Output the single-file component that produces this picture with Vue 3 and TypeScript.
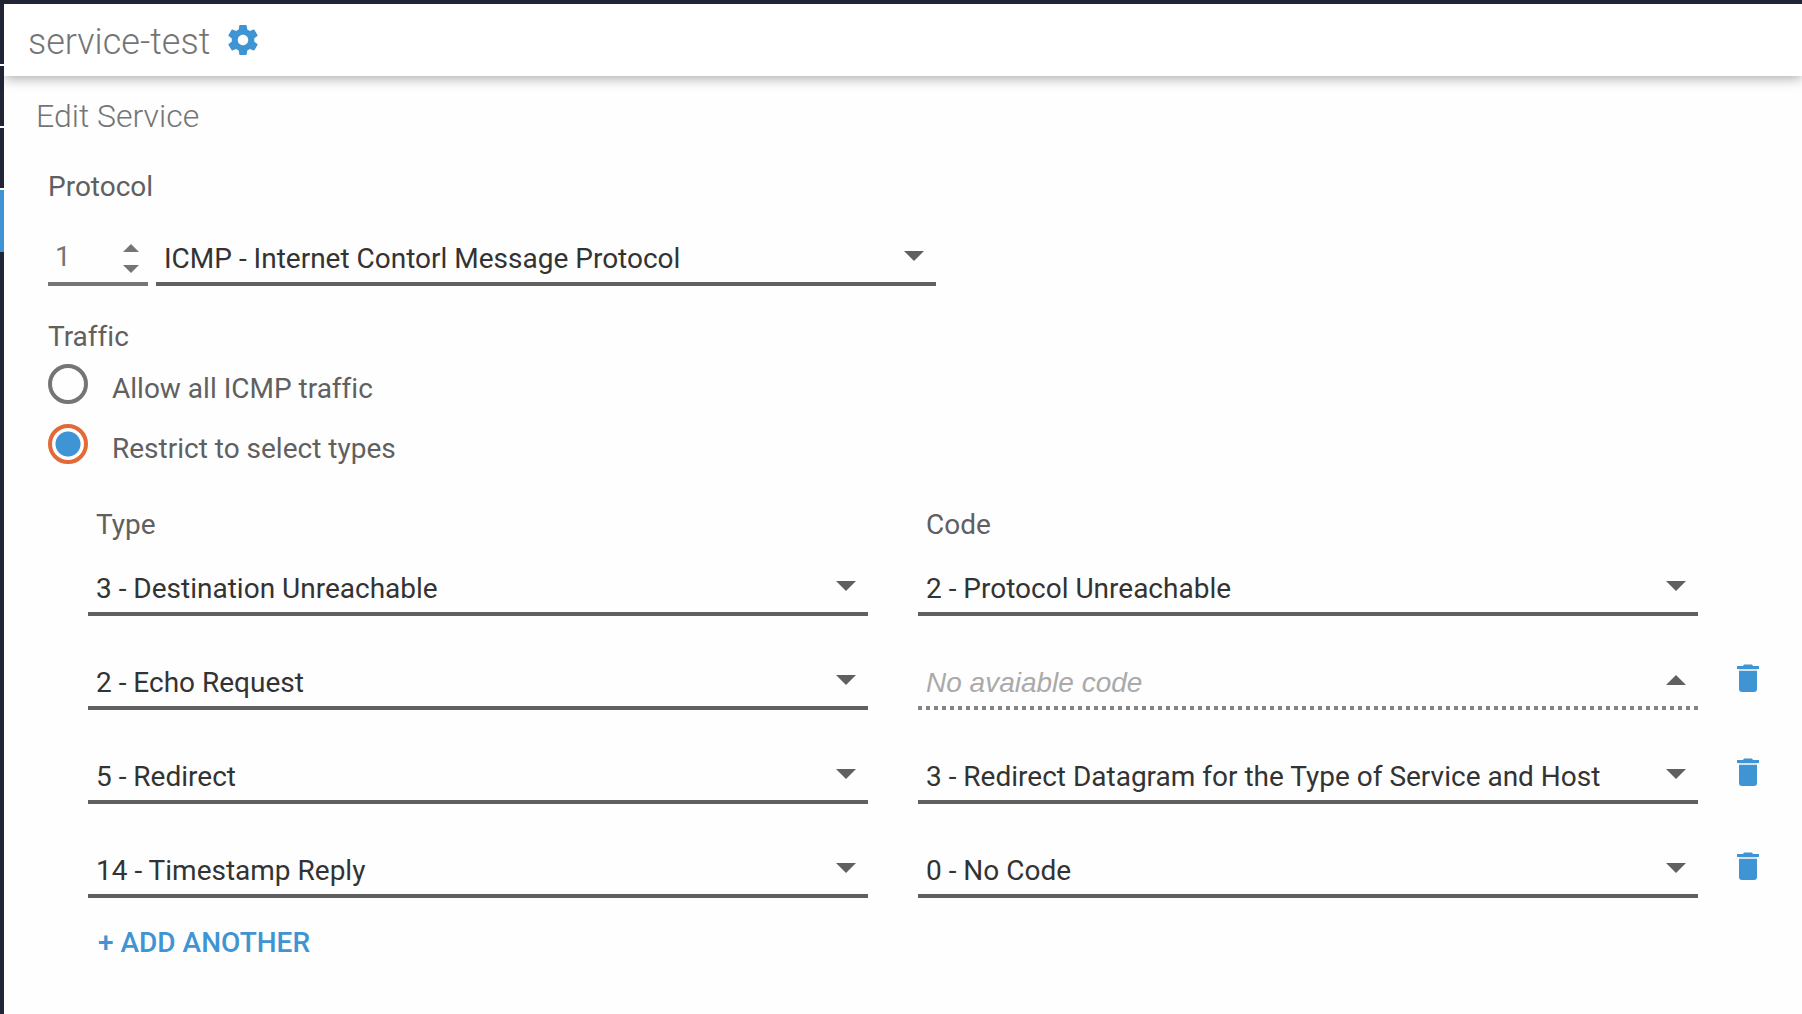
<script setup lang="ts">
import { ref } from 'vue'

interface Rule {
  id: number
  type: string
  code: string | null
}

const protocolNumber = ref(1)
const protocol = ref('ICMP - Internet Contorl Message Protocol')
const traffic = ref<'all' | 'restrict'>('restrict')

const rules = ref<Rule[]>([
  { id: 1, type: '3 - Destination Unreachable', code: '2 - Protocol Unreachable' },
  { id: 2, type: '2 - Echo Request', code: null },
  { id: 3, type: '5 - Redirect', code: '3 - Redirect Datagram for the Type of Service and Host' },
  { id: 4, type: '14 - Timestamp Reply', code: '0 - No Code' },
])

const types = rules.value.map((r) => r.type)
const codes = rules.value.flatMap((r) => (r.code ? [r.code] : []))
let nextId = 5

function step(by: number) {
  protocolNumber.value = Math.min(255, Math.max(0, protocolNumber.value + by))
}
function addRule() {
  rules.value.push({ id: nextId++, type: types[0], code: codes[0] })
}
function removeRule(id: number) {
  rules.value = rules.value.filter((r) => r.id !== id)
}
</script>

<template>
  <div class="shell">
    <nav class="rail" aria-label="Sections">
      <a v-for="n in 4" :key="n" href="#" class="rail-item" :class="{ active: n === 4 }" :aria-label="'Section ' + n"></a>
    </nav>

    <div class="panel">
      <header class="topbar">
        <h1>service-test</h1>
        <button type="button" class="icon-button" aria-label="Settings">
          <svg width="36" height="36" viewBox="0 0 24 24" fill="currentColor">
            <path d="M19.43 12.98c.04-.32.07-.64.07-.98s-.03-.66-.07-.98l2.11-1.65c.19-.15.24-.42.12-.64l-2-3.46c-.12-.22-.39-.3-.61-.22l-2.49 1c-.52-.4-1.08-.73-1.69-.98l-.38-2.65C14.46 2.18 14.25 2 14 2h-4c-.25 0-.46.18-.49.42l-.38 2.65c-.61.25-1.17.59-1.69.98l-2.49-1c-.23-.09-.49 0-.61.22l-2 3.46c-.13.22-.07.49.12.64l2.11 1.65c-.04.32-.07.65-.07.98s.03.66.07.98l-2.11 1.65c-.19.15-.24.42-.12.64l2 3.46c.12.22.39.3.61.22l2.49-1c.52.4 1.08.73 1.69.98l.38 2.65c.03.24.24.42.49.42h4c.25 0 .46-.18.49-.42l.38-2.65c.61-.25 1.17-.59 1.69-.98l2.49 1c.23.09.49 0 .61-.22l2-3.46c.12-.22.07-.49-.12-.64l-2.11-1.65zM12 15.5c-1.93 0-3.5-1.57-3.5-3.5s1.57-3.5 3.5-3.5 3.5 1.57 3.5 3.5-1.57 3.5-3.5 3.5z" />
          </svg>
        </button>
      </header>

      <main>
        <h2>Edit Service</h2>
        <form @submit.prevent>
          <label class="caption" for="protocol">Protocol</label>
          <div class="protocol">
            <div class="number">
              <input v-model.number="protocolNumber" type="text" inputmode="numeric" aria-label="Protocol number" />
              <div class="steps">
                <button type="button" aria-label="Increase" @click="step(1)">
                  <svg width="16" height="8"><path d="M0 8 8 0l8 8z" /></svg>
                </button>
                <button type="button" aria-label="Decrease" @click="step(-1)">
                  <svg width="16" height="8"><path d="M0 0h16L8 8z" /></svg>
                </button>
              </div>
            </div>
            <div class="select">
              <select id="protocol" v-model="protocol">
                <option>ICMP - Internet Contorl Message Protocol</option>
              </select>
              <svg class="arrow" width="20" height="10"><path d="M0 0h20L10 10z" /></svg>
            </div>
          </div>

          <fieldset>
            <legend class="caption">Traffic</legend>
            <label class="choice">
              <input v-model="traffic" type="radio" name="traffic" value="all" />
              <span>Allow all ICMP traffic</span>
            </label>
            <label class="choice">
              <input v-model="traffic" type="radio" name="traffic" value="restrict" />
              <span>Restrict to select types</span>
            </label>
          </fieldset>

          <section class="rules">
            <div class="row heads">
              <span id="type-head" class="caption">Type</span>
              <span id="code-head" class="caption">Code</span>
            </div>
            <div v-for="(rule, i) in rules" :key="rule.id" class="row">
              <div class="select">
                <select v-model="rule.type" aria-labelledby="type-head">
                  <option v-for="t in types" :key="t">{{ t }}</option>
                </select>
                <svg class="arrow" width="20" height="10"><path d="M0 0h20L10 10z" /></svg>
              </div>
              <div v-if="rule.code !== null" class="select">
                <select v-model="rule.code" aria-labelledby="code-head">
                  <option v-for="c in codes" :key="c">{{ c }}</option>
                </select>
                <svg class="arrow" width="20" height="10"><path d="M0 0h20L10 10z" /></svg>
              </div>
              <div v-else class="select">
                <select disabled aria-labelledby="code-head">
                  <option>No avaiable code</option>
                </select>
                <svg class="arrow" width="20" height="10"><path d="M0 10 10 0l10 10z" /></svg>
              </div>
              <button v-if="i > 0" type="button" class="icon-button trash" aria-label="Remove" @click="removeRule(rule.id)">
                <svg width="22" height="28" viewBox="0 0 22 28" fill="currentColor">
                  <path d="M0 2h6l1-1.5h8L16 2h6v3H0z" />
                  <path d="M2 5h18v2H2z" opacity=".25" />
                  <path d="M2 7h18v18a3 3 0 0 1-3 3H5a3 3 0 0 1-3-3z" />
                </svg>
              </button>
            </div>
            <button type="button" class="add" @click="addRule">+ ADD ANOTHER</button>
          </section>
        </form>
      </main>
    </div>
  </div>
</template>

<style>
body {
  margin: 0;
  background: #fefefe;
}
</style>

<style scoped>
.shell {
  display: flex;
  box-sizing: border-box;
  min-height: 100vh;
  border-top: 4px solid #212336;
  font-family: Roboto, 'Liberation Sans', sans-serif;
  font-size: 28px;
  font-variant-ligatures: none;
  line-height: 32px;
  color: #606060;
}
.rail {
  flex: 0 0 4px;
  background: #212336;
}
.rail-item {
  display: block;
  height: 60px;
  border-bottom: 2px solid #fff;
}
.rail-item.active {
  height: 62px;
  border: 0;
  background: #3f94d4;
}
.panel {
  flex: 1;
  min-width: 0;
  overflow: hidden;
}
.topbar {
  display: flex;
  align-items: center;
  gap: 15px;
  height: 72px;
  padding-left: 24px;
  background: #fff;
  box-shadow: 0 2px 12px rgba(0, 0, 0, 0.35);
}
h1,
h2 {
  margin: 0;
  font-weight: 300;
  color: #757575;
}
h1 {
  padding-top: 4px;
  font-size: 36px;
  line-height: 40px;
}
h2 {
  font-size: 32px;
  line-height: 38px;
}
button {
  padding: 0;
  border: 0;
  background: none;
  font: inherit;
  cursor: pointer;
}
svg {
  display: block;
}
.icon-button {
  color: #3f94d4;
}
main {
  padding: 21px 0 32px 32px;
}
form {
  padding: 36px 0 0 12px;
}
.caption {
  display: block;
  padding: 0;
}
.protocol {
  display: flex;
  gap: 8px;
  margin: 31px 0 35px;
}
.protocol .select {
  flex: 0 1 780px;
}
.number {
  display: flex;
  box-sizing: border-box;
  width: 100px;
  height: 52px;
  padding-right: 9px;
  border-bottom: 4px solid #757575;
}
.number input {
  flex: 1;
  min-width: 0;
  padding: 0 0 2px 7px;
  border: 0;
  outline: 0;
  background: none;
  font: inherit;
  color: #757575;
}
.steps {
  display: flex;
  flex-direction: column;
  gap: 13px;
  padding-top: 10px;
  fill: #757575;
}
.select {
  display: grid;
  grid-template-columns: minmax(0, 1fr) 20px 12px;
}
select {
  grid-area: 1 / 1 / 2 / 4;
  appearance: none;
  box-sizing: border-box;
  height: 52px;
  width: 100%;
  margin: 0;
  padding: 2px 40px 0 8px;
  border: 0;
  border-bottom: 4px solid #606060;
  border-radius: 0;
  background: none;
  font: inherit;
  color: #333;
}
select:disabled {
  border-color: transparent;
  background: repeating-linear-gradient(90deg, #858585 0 4px, transparent 4px 8px) left bottom / 100% 4px no-repeat border-box;
  font-family: 'Liberation Sans', sans-serif;
  font-style: italic;
  color: #aaa;
  opacity: 1;
}
.arrow {
  grid-area: 1 / 2 / 2 / 3;
  margin-top: 17px;
  fill: #606060;
  pointer-events: none;
}
fieldset {
  display: grid;
  gap: 20px;
  margin: 0;
  padding: 0;
  border: 0;
}
legend {
  margin-bottom: 11px;
}
.choice {
  display: flex;
  gap: 24px;
  height: 40px;
}
.choice input {
  appearance: none;
  box-sizing: border-box;
  width: 40px;
  height: 40px;
  margin: 0;
  border: 4px solid #757575;
  border-radius: 50%;
}
.choice input:checked {
  border-color: #e36a38;
  background: radial-gradient(circle, #3f94d4 12px, transparent 13px);
}
.choice span {
  padding-top: 9px;
}
.rules {
  padding: 45px 0 0 40px;
}
.row {
  display: grid;
  grid-template-columns: minmax(0, 1fr) minmax(0, 1fr) 54px;
  gap: 50px;
  margin-bottom: 42px;
}
.heads {
  margin-bottom: 23px;
}
.heads .caption {
  padding-left: 8px;
}
.trash {
  justify-self: start;
  align-self: start;
  margin: 6px 0 0 -11px;
}
.row:last-of-type {
  margin-bottom: 29px;
}
.add {
  padding-left: 10px;
  font-weight: 500;
  color: #3f94d4;
}
</style>
